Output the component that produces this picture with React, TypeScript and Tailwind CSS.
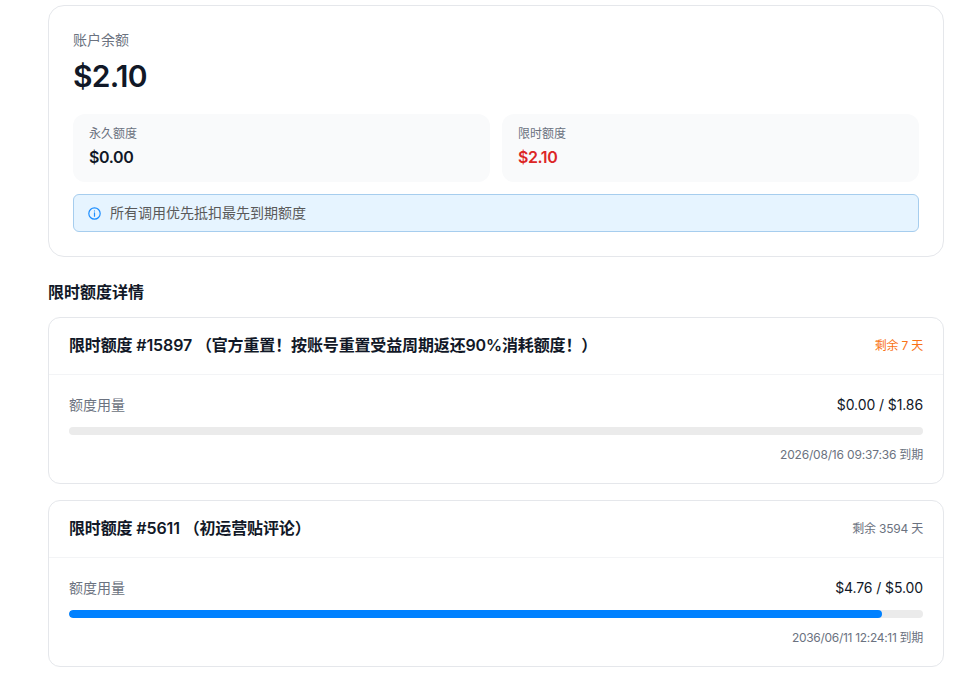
import React from "react";

const font = { fontFamily: '"Inter", "Noto Sans CJK SC", sans-serif' };

function Quota({ title, days, daysCls, used, total, pct, expire, expCls }: { title: string; days: string; daysCls: string; used: string; total: string; pct: number; expire: string; expCls: string }) {
  return (
    <div className="rounded-xl border border-[#e5e7eb] bg-white">
      <div className="flex h-[57px] items-center justify-between border-b border-[#f3f4f6] px-5">
        <span className="mb-[2px] text-base font-semibold tracking-[-0.14px] text-[#111827]">{title}</span>
        <span className={`text-xs tracking-[-0.2px] ${daysCls}`}>{days}</span>
      </div>
      <div className="px-5 pb-5 pt-5">
        <div className="flex items-center justify-between text-sm leading-5">
          <span className="text-[#6b7280]">额度用量</span>
          <span className="font-normal tracking-[-0.1px] text-[#111827]">{used} / {total}</span>
        </div>
        <div className="mt-3 h-2 overflow-hidden rounded-full bg-[#ebebeb]">
          <div className="h-full rounded-full bg-[#0081ff]" style={{ width: `${pct}%` }} />
        </div>
        <div className={`mt-3 text-right text-xs leading-4 text-[#6b7280] ${expCls}`}>{expire}</div>
      </div>
    </div>
  );
}

export default function App() {
  return (
    <div className="min-h-[692px] overflow-hidden bg-white pl-12 pr-[33px] pt-[5px]" style={font}>
      <div className="rounded-2xl border border-[#e5e7eb] bg-white px-6 pb-6 pt-6">
        <div className="text-sm leading-5 text-[#6b7280]">账户余额</div>
        <div className="mt-2 text-3xl font-semibold leading-9 tracking-[-0.75px] text-[#111827]">$2.10</div>
        <div className="mt-5 grid grid-cols-2 gap-3">
          <div className="h-[68px] rounded-xl bg-[#f9fafb] px-4 pt-3">
            <div className="text-xs leading-4 text-[#6b7280]">永久额度</div>
            <div className="mt-[3px] text-base font-semibold leading-6 tracking-[-0.4px] text-[#111827]">$0.00</div>
          </div>
          <div className="h-[68px] rounded-xl bg-[#f9fafb] px-4 pt-3">
            <div className="text-xs leading-4 text-[#6b7280]">限时额度</div>
            <div className="mt-[3px] text-base font-semibold leading-6 tracking-[-0.4px] text-[#dc2626]">$2.10</div>
          </div>
        </div>
        <div className="mt-3 flex h-[38px] items-center gap-[9px] rounded-md border border-[#a6cdee] bg-[#e6f4ff] pl-[14px]">
          <svg width="13" height="13" viewBox="0 0 24 24" fill="none" stroke="#1c8eff" strokeWidth="2.2" strokeLinecap="round">
            <circle cx="12" cy="12" r="10.5" />
            <path d="M12 11v6" />
            <path d="M12 7.2v.1" />
          </svg>
          <span className="text-sm text-[#595959]">所有调用优先抵扣最先到期额度</span>
        </div>
      </div>
      <div className="mt-[23px] text-base font-semibold leading-6 text-[#111827]">限时额度详情</div>
      <div className="mt-[13px] flex flex-col gap-4">
        <Quota title="限时额度 #15897 （官方重置！按账号重置受益周期返还90%消耗额度！）" days="剩余 7 天" daysCls="text-[#f97316]" used="$0.00" total="$1.86" pct={0} expire="2026/08/16 09:37:36 到期" expCls="tracking-[-0.18px]" />
        <Quota title="限时额度 #5611 （初运营贴评论）" days="剩余 3594 天" daysCls="text-[#6b7280]" used="$4.76" total="$5.00" pct={95.2} expire="2036/06/11 12:24:11 到期" expCls="tracking-[-0.3px]" />
      </div>
    </div>
  );
}
